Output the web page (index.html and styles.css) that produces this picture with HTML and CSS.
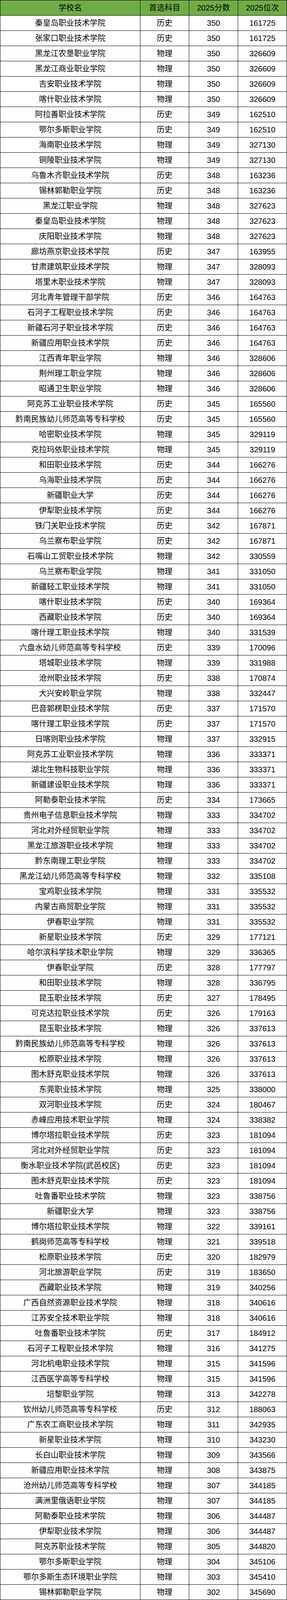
FILE: index.html
```html
<!DOCTYPE html>
<html lang="zh-CN">
<head>
<meta charset="utf-8">
<title>2025分数位次</title>
<link rel="stylesheet" href="styles.css">
</head>
<body>
<div class="score-table" role="table">
<div class="row head" role="row"><div class="cell" role="columnheader">学校名</div><div class="cell" role="columnheader">首选科目</div><div class="cell" role="columnheader">2025分数</div><div class="cell" role="columnheader">2025位次</div></div>
<div class="row"><div class="cell">秦皇岛职业技术学院</div><div class="cell">历史</div><div class="cell">350</div><div class="cell">161725</div></div>
<div class="row"><div class="cell">张家口职业技术学院</div><div class="cell">历史</div><div class="cell">350</div><div class="cell">161725</div></div>
<div class="row"><div class="cell">黑龙江农垦职业学院</div><div class="cell">物理</div><div class="cell">350</div><div class="cell">326609</div></div>
<div class="row"><div class="cell">黑龙江商业职业学院</div><div class="cell">物理</div><div class="cell">350</div><div class="cell">326609</div></div>
<div class="row"><div class="cell">吉安职业技术学院</div><div class="cell">物理</div><div class="cell">350</div><div class="cell">326609</div></div>
<div class="row"><div class="cell">喀什职业技术学院</div><div class="cell">物理</div><div class="cell">350</div><div class="cell">326609</div></div>
<div class="row"><div class="cell">阿拉善职业技术学院</div><div class="cell">历史</div><div class="cell">349</div><div class="cell">162510</div></div>
<div class="row"><div class="cell">鄂尔多斯职业学院</div><div class="cell">历史</div><div class="cell">349</div><div class="cell">162510</div></div>
<div class="row"><div class="cell">海南职业技术学院</div><div class="cell">物理</div><div class="cell">349</div><div class="cell">327130</div></div>
<div class="row"><div class="cell">铜陵职业技术学院</div><div class="cell">物理</div><div class="cell">349</div><div class="cell">327130</div></div>
<div class="row"><div class="cell">乌鲁木齐职业技术学院</div><div class="cell">历史</div><div class="cell">348</div><div class="cell">163236</div></div>
<div class="row"><div class="cell">锡林郭勒职业学院</div><div class="cell">历史</div><div class="cell">348</div><div class="cell">163236</div></div>
<div class="row"><div class="cell">黑龙江职业学院</div><div class="cell">物理</div><div class="cell">348</div><div class="cell">327623</div></div>
<div class="row"><div class="cell">秦皇岛职业技术学院</div><div class="cell">物理</div><div class="cell">348</div><div class="cell">327623</div></div>
<div class="row"><div class="cell">庆阳职业技术学院</div><div class="cell">物理</div><div class="cell">348</div><div class="cell">327623</div></div>
<div class="row"><div class="cell">廊坊燕京职业技术学院</div><div class="cell">历史</div><div class="cell">347</div><div class="cell">163955</div></div>
<div class="row"><div class="cell">甘肃建筑职业技术学院</div><div class="cell">物理</div><div class="cell">347</div><div class="cell">328093</div></div>
<div class="row"><div class="cell">塔里木职业技术学院</div><div class="cell">物理</div><div class="cell">347</div><div class="cell">328093</div></div>
<div class="row"><div class="cell">河北青年管理干部学院</div><div class="cell">历史</div><div class="cell">346</div><div class="cell">164763</div></div>
<div class="row"><div class="cell">石河子工程职业技术学院</div><div class="cell">历史</div><div class="cell">346</div><div class="cell">164763</div></div>
<div class="row"><div class="cell">新疆石河子职业技术学院</div><div class="cell">历史</div><div class="cell">346</div><div class="cell">164763</div></div>
<div class="row"><div class="cell">新疆应用职业技术学院</div><div class="cell">历史</div><div class="cell">346</div><div class="cell">164763</div></div>
<div class="row"><div class="cell">江西青年职业学院</div><div class="cell">物理</div><div class="cell">346</div><div class="cell">328606</div></div>
<div class="row"><div class="cell">荆州理工职业学院</div><div class="cell">物理</div><div class="cell">346</div><div class="cell">328606</div></div>
<div class="row"><div class="cell">昭通卫生职业学院</div><div class="cell">物理</div><div class="cell">346</div><div class="cell">328606</div></div>
<div class="row"><div class="cell">阿克苏工业职业技术学院</div><div class="cell">历史</div><div class="cell">345</div><div class="cell">165560</div></div>
<div class="row"><div class="cell">黔南民族幼儿师范高等专科学校</div><div class="cell">历史</div><div class="cell">345</div><div class="cell">165560</div></div>
<div class="row"><div class="cell">哈密职业技术学院</div><div class="cell">物理</div><div class="cell">345</div><div class="cell">329119</div></div>
<div class="row"><div class="cell">克拉玛依职业技术学院</div><div class="cell">物理</div><div class="cell">345</div><div class="cell">329119</div></div>
<div class="row"><div class="cell">和田职业技术学院</div><div class="cell">历史</div><div class="cell">344</div><div class="cell">166276</div></div>
<div class="row"><div class="cell">乌海职业技术学院</div><div class="cell">历史</div><div class="cell">344</div><div class="cell">166276</div></div>
<div class="row"><div class="cell">新疆职业大学</div><div class="cell">历史</div><div class="cell">344</div><div class="cell">166276</div></div>
<div class="row"><div class="cell">伊犁职业技术学院</div><div class="cell">历史</div><div class="cell">344</div><div class="cell">166276</div></div>
<div class="row"><div class="cell">铁门关职业技术学院</div><div class="cell">历史</div><div class="cell">342</div><div class="cell">167871</div></div>
<div class="row"><div class="cell">乌兰察布职业学院</div><div class="cell">历史</div><div class="cell">342</div><div class="cell">167871</div></div>
<div class="row"><div class="cell">石嘴山工贸职业技术学院</div><div class="cell">物理</div><div class="cell">342</div><div class="cell">330559</div></div>
<div class="row"><div class="cell">乌兰察布职业学院</div><div class="cell">物理</div><div class="cell">341</div><div class="cell">331050</div></div>
<div class="row"><div class="cell">新疆轻工职业技术学院</div><div class="cell">物理</div><div class="cell">341</div><div class="cell">331050</div></div>
<div class="row"><div class="cell">喀什职业技术学院</div><div class="cell">历史</div><div class="cell">340</div><div class="cell">169364</div></div>
<div class="row"><div class="cell">西藏职业技术学院</div><div class="cell">历史</div><div class="cell">340</div><div class="cell">169364</div></div>
<div class="row"><div class="cell">喀什理工职业技术学院</div><div class="cell">物理</div><div class="cell">340</div><div class="cell">331539</div></div>
<div class="row"><div class="cell">六盘水幼儿师范高等专科学校</div><div class="cell">历史</div><div class="cell">339</div><div class="cell">170096</div></div>
<div class="row"><div class="cell">塔城职业技术学院</div><div class="cell">物理</div><div class="cell">339</div><div class="cell">331988</div></div>
<div class="row"><div class="cell">沧州职业技术学院</div><div class="cell">历史</div><div class="cell">338</div><div class="cell">170874</div></div>
<div class="row"><div class="cell">大兴安岭职业学院</div><div class="cell">物理</div><div class="cell">338</div><div class="cell">332447</div></div>
<div class="row"><div class="cell">巴音郭楞职业技术学院</div><div class="cell">历史</div><div class="cell">337</div><div class="cell">171570</div></div>
<div class="row"><div class="cell">喀什理工职业技术学院</div><div class="cell">历史</div><div class="cell">337</div><div class="cell">171570</div></div>
<div class="row"><div class="cell">日喀则职业技术学院</div><div class="cell">物理</div><div class="cell">337</div><div class="cell">332915</div></div>
<div class="row"><div class="cell">阿克苏工业职业技术学院</div><div class="cell">物理</div><div class="cell">336</div><div class="cell">333371</div></div>
<div class="row"><div class="cell">湖北生物科技职业学院</div><div class="cell">物理</div><div class="cell">336</div><div class="cell">333371</div></div>
<div class="row"><div class="cell">新疆建设职业技术学院</div><div class="cell">物理</div><div class="cell">336</div><div class="cell">333371</div></div>
<div class="row"><div class="cell">阿勒泰职业技术学院</div><div class="cell">历史</div><div class="cell">334</div><div class="cell">173665</div></div>
<div class="row"><div class="cell">贵州电子信息职业技术学院</div><div class="cell">物理</div><div class="cell">333</div><div class="cell">334702</div></div>
<div class="row"><div class="cell">河北对外经贸职业学院</div><div class="cell">物理</div><div class="cell">333</div><div class="cell">334702</div></div>
<div class="row"><div class="cell">黑龙江旅游职业技术学院</div><div class="cell">物理</div><div class="cell">333</div><div class="cell">334702</div></div>
<div class="row"><div class="cell">黔东南理工职业学院</div><div class="cell">物理</div><div class="cell">333</div><div class="cell">334702</div></div>
<div class="row"><div class="cell">黑龙江幼儿师范高等专科学校</div><div class="cell">物理</div><div class="cell">332</div><div class="cell">335108</div></div>
<div class="row"><div class="cell">宝鸡职业技术学院</div><div class="cell">物理</div><div class="cell">331</div><div class="cell">335532</div></div>
<div class="row"><div class="cell">内蒙古商贸职业学院</div><div class="cell">物理</div><div class="cell">331</div><div class="cell">335532</div></div>
<div class="row"><div class="cell">伊春职业学院</div><div class="cell">物理</div><div class="cell">331</div><div class="cell">335532</div></div>
<div class="row"><div class="cell">新星职业技术学院</div><div class="cell">历史</div><div class="cell">329</div><div class="cell">177121</div></div>
<div class="row"><div class="cell">哈尔滨科学技术职业学院</div><div class="cell">物理</div><div class="cell">329</div><div class="cell">336365</div></div>
<div class="row"><div class="cell">伊春职业学院</div><div class="cell">历史</div><div class="cell">328</div><div class="cell">177797</div></div>
<div class="row"><div class="cell">和田职业技术学院</div><div class="cell">物理</div><div class="cell">328</div><div class="cell">336795</div></div>
<div class="row"><div class="cell">昆玉职业技术学院</div><div class="cell">历史</div><div class="cell">327</div><div class="cell">178495</div></div>
<div class="row"><div class="cell">可克达拉职业技术学院</div><div class="cell">历史</div><div class="cell">326</div><div class="cell">179163</div></div>
<div class="row"><div class="cell">昆玉职业技术学院</div><div class="cell">物理</div><div class="cell">326</div><div class="cell">337613</div></div>
<div class="row"><div class="cell">黔南民族幼儿师范高等专科学校</div><div class="cell">物理</div><div class="cell">326</div><div class="cell">337613</div></div>
<div class="row"><div class="cell">松原职业技术学院</div><div class="cell">物理</div><div class="cell">326</div><div class="cell">337613</div></div>
<div class="row"><div class="cell">图木舒克职业技术学院</div><div class="cell">物理</div><div class="cell">326</div><div class="cell">337613</div></div>
<div class="row"><div class="cell">东莞职业技术学院</div><div class="cell">物理</div><div class="cell">325</div><div class="cell">338000</div></div>
<div class="row"><div class="cell">双河职业技术学院</div><div class="cell">历史</div><div class="cell">324</div><div class="cell">180467</div></div>
<div class="row"><div class="cell">赤峰应用技术职业学院</div><div class="cell">物理</div><div class="cell">324</div><div class="cell">338382</div></div>
<div class="row"><div class="cell">博尔塔拉职业技术学院</div><div class="cell">历史</div><div class="cell">323</div><div class="cell">181094</div></div>
<div class="row"><div class="cell">河北对外经贸职业学院</div><div class="cell">历史</div><div class="cell">323</div><div class="cell">181094</div></div>
<div class="row"><div class="cell">衡水职业技术学院(武邑校区)</div><div class="cell">历史</div><div class="cell">323</div><div class="cell">181094</div></div>
<div class="row"><div class="cell">图木舒克职业技术学院</div><div class="cell">历史</div><div class="cell">323</div><div class="cell">181094</div></div>
<div class="row"><div class="cell">吐鲁番职业技术学院</div><div class="cell">物理</div><div class="cell">323</div><div class="cell">338756</div></div>
<div class="row"><div class="cell">新疆职业大学</div><div class="cell">物理</div><div class="cell">323</div><div class="cell">338756</div></div>
<div class="row"><div class="cell">博尔塔拉职业技术学院</div><div class="cell">物理</div><div class="cell">322</div><div class="cell">339161</div></div>
<div class="row"><div class="cell">鹤岗师范高等专科学校</div><div class="cell">物理</div><div class="cell">321</div><div class="cell">339518</div></div>
<div class="row"><div class="cell">松原职业技术学院</div><div class="cell">历史</div><div class="cell">320</div><div class="cell">182979</div></div>
<div class="row"><div class="cell">河北旅游职业学院</div><div class="cell">历史</div><div class="cell">319</div><div class="cell">183650</div></div>
<div class="row"><div class="cell">西藏职业技术学院</div><div class="cell">物理</div><div class="cell">319</div><div class="cell">340256</div></div>
<div class="row"><div class="cell">广西自然资源职业技术学院</div><div class="cell">物理</div><div class="cell">318</div><div class="cell">340616</div></div>
<div class="row"><div class="cell">江苏安全技术职业学院</div><div class="cell">物理</div><div class="cell">318</div><div class="cell">340616</div></div>
<div class="row"><div class="cell">吐鲁番职业技术学院</div><div class="cell">历史</div><div class="cell">317</div><div class="cell">184912</div></div>
<div class="row"><div class="cell">石河子工程职业技术学院</div><div class="cell">物理</div><div class="cell">316</div><div class="cell">341275</div></div>
<div class="row"><div class="cell">河北机电职业技术学院</div><div class="cell">物理</div><div class="cell">315</div><div class="cell">341596</div></div>
<div class="row"><div class="cell">江西医学高等专科学校</div><div class="cell">物理</div><div class="cell">315</div><div class="cell">341596</div></div>
<div class="row"><div class="cell">培黎职业学院</div><div class="cell">物理</div><div class="cell">313</div><div class="cell">342278</div></div>
<div class="row"><div class="cell">钦州幼儿师范高等专科学校</div><div class="cell">历史</div><div class="cell">312</div><div class="cell">188063</div></div>
<div class="row"><div class="cell">广东农工商职业技术学院</div><div class="cell">物理</div><div class="cell">311</div><div class="cell">342935</div></div>
<div class="row"><div class="cell">新星职业技术学院</div><div class="cell">物理</div><div class="cell">310</div><div class="cell">343230</div></div>
<div class="row"><div class="cell">长白山职业技术学院</div><div class="cell">物理</div><div class="cell">309</div><div class="cell">343566</div></div>
<div class="row"><div class="cell">新疆应用职业技术学院</div><div class="cell">物理</div><div class="cell">308</div><div class="cell">343875</div></div>
<div class="row"><div class="cell">沧州幼儿师范高等专科学校</div><div class="cell">物理</div><div class="cell">307</div><div class="cell">344185</div></div>
<div class="row"><div class="cell">满洲里俄语职业学院</div><div class="cell">物理</div><div class="cell">307</div><div class="cell">344185</div></div>
<div class="row"><div class="cell">阿勒泰职业技术学院</div><div class="cell">物理</div><div class="cell">306</div><div class="cell">344487</div></div>
<div class="row"><div class="cell">伊犁职业技术学院</div><div class="cell">物理</div><div class="cell">306</div><div class="cell">344487</div></div>
<div class="row"><div class="cell">阿克苏职业技术学院</div><div class="cell">物理</div><div class="cell">305</div><div class="cell">344820</div></div>
<div class="row"><div class="cell">鄂尔多斯职业学院</div><div class="cell">物理</div><div class="cell">304</div><div class="cell">345106</div></div>
<div class="row"><div class="cell">鄂尔多斯生态环境职业学院</div><div class="cell">物理</div><div class="cell">303</div><div class="cell">345410</div></div>
<div class="row"><div class="cell">锡林郭勒职业学院</div><div class="cell">物理</div><div class="cell">302</div><div class="cell">345690</div></div>
</div>
</body>
</html>
```

FILE: styles.css
```css
html, body {
  margin: 0;
  padding: 0;
  background: #ffffff;
}

.score-table {
  display: grid;
  grid-template-rows: repeat(105, 1fr);
  width: 734px;
  height: 100vh;
  max-height: 4201px;
  box-sizing: border-box;
  border-top: 1px solid #000000;
  border-left: 1px solid #000000;
  font-family: "Liberation Sans", "Noto Sans CJK SC", sans-serif;
  font-size: 20px;
  color: #000000;
}

.row {
  display: grid;
  grid-template-columns: 358px 125px 125px 125px;
  min-height: 0;
  box-sizing: border-box;
  border-bottom: 1px solid #000000;
}

.row.head {
  background: #70ad47;
}

.cell {
  display: flex;
  align-items: center;
  justify-content: center;
  box-sizing: border-box;
  border-right: 1px solid #000000;
  min-height: 0;
  overflow: hidden;
  white-space: nowrap;
  line-height: 20px;
}
```
